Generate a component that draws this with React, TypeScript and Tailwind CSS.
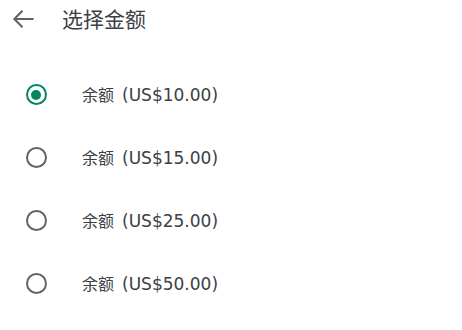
import { useState } from "react";

const AMOUNTS = ["10.00", "15.00", "25.00", "50.00"];

export default function App() {
  const [selected, setSelected] = useState(0);
  return (
    <div className="w-[462px] h-[330px] bg-white text-[#3c4043] font-['Noto_Sans_CJK_SC',sans-serif]">
      <header className="h-[37px] flex items-center">
        <button className="h-[37px] pl-[12px] flex items-center">
          <svg width="22" height="20" viewBox="0 0 22 20" fill="none">
            <path d="M21.5 10H2.5M10.5 1.8L2.3 10l8.2 8.2" stroke="#5f6368" strokeWidth="2" />
          </svg>
        </button>
        <h1 className="ml-[28px] text-[21px] leading-none">选择金额</h1>
      </header>
      <ul className="mt-[26px]">
        {AMOUNTS.map((a, i) => (
          <li
            key={a}
            onClick={() => setSelected(i)}
            className="h-[63px] flex items-center cursor-pointer"
          >
            <span className="w-[72px] flex justify-center">
              <span
                className={
                  "w-[21px] h-[21px] rounded-full border-2 flex items-center justify-center " +
                  (selected === i ? "border-[#01875f]" : "border-[#5f6368]")
                }
              >
                {selected === i && <span className="w-[10px] h-[10px] rounded-full bg-[#01875f]" />}
              </span>
            </span>
            <span className="ml-[10px] flex items-baseline leading-none">
              <span className="text-[16px]">余额</span>
              <span className="ml-[8px] text-[17px] font-['DejaVu_Sans',sans-serif]">(US${a})</span>
            </span>
          </li>
        ))}
      </ul>
    </div>
  );
}
